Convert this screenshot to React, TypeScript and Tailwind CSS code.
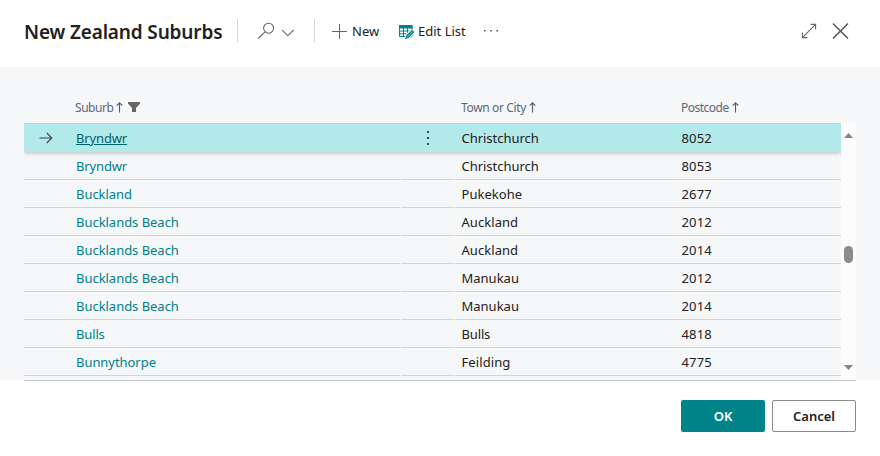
import React from "react";

type Row = { suburb: string; town: string; code: string; link: string; townCls: string };

const rows: Row[] = [
  { suburb: "Bryndwr", town: "Christchurch", code: "8052", link: "tracking-[-0.15px]", townCls: "tracking-[-0.03px]" },
  { suburb: "Bryndwr", town: "Christchurch", code: "8053", link: "tracking-[-0.15px]", townCls: "tracking-[-0.03px]" },
  { suburb: "Buckland", town: "Pukekohe", code: "2677", link: "tracking-[-0.05px]", townCls: "tracking-[0.05px]" },
  { suburb: "Bucklands Beach", town: "Auckland", code: "2012", link: "tracking-[-0.03px]", townCls: "tracking-[0.05px]" },
  { suburb: "Bucklands Beach", town: "Auckland", code: "2014", link: "tracking-[-0.03px]", townCls: "tracking-[0.05px]" },
  { suburb: "Bucklands Beach", town: "Manukau", code: "2012", link: "tracking-[-0.03px]", townCls: "tracking-normal" },
  { suburb: "Bucklands Beach", town: "Manukau", code: "2014", link: "tracking-[-0.03px]", townCls: "tracking-normal" },
  { suburb: "Bulls", town: "Bulls", code: "4818", link: "tracking-[-0.15px]", townCls: "tracking-[-0.15px]" },
  { suburb: "Bunnythorpe", town: "Feilding", code: "4775", link: "tracking-[-0.05px]", townCls: "tracking-[0.1px]" },
];

function SortArrow() {
  return (
    <svg width="7" height="11" viewBox="0 0 7 11" fill="none" stroke="#505c6d" strokeWidth="1.1">
      <path d="M3.5 10.5V1M.7 3.7 3.5.9l2.8 2.8" />
    </svg>
  );
}

function Header() {
  return (
    <header className="flex h-[67px] items-start pl-6 pt-[19px]">
      <h1 className="w-[213px] whitespace-nowrap text-[19px] font-semibold leading-[26px] tracking-[-0.15px] text-[#212121]">
        New Zealand Suburbs
      </h1>
      <div className="h-[23px] w-px bg-[#d0d3d8]" />
      <svg className="ml-[19px] mt-[3px]" width="18" height="18" viewBox="0 0 18 18" fill="none" stroke="#666" strokeWidth="1.1">
        <circle cx="11.6" cy="6.2" r="5" />
        <path d="M8 9.8 1.2 16.5" />
      </svg>
      <svg className="ml-[6px] mt-[10px]" width="14" height="8" viewBox="0 0 14 8" fill="none" stroke="#777" strokeWidth="1.1">
        <path d="m1 1 5.8 5.7L12.6 1" />
      </svg>
      <div className="ml-[19px] h-[23px] w-px bg-[#d0d3d8]" />
      <svg className="ml-[16px] mt-[4px]" width="17" height="17" viewBox="0 0 17 17" fill="none" stroke="#666" strokeWidth="1">
        <path d="M8.5 1v15M1 8.5h15" />
      </svg>
      <span className="ml-[4px] w-[47px] text-[13px] leading-6 text-[#212121]">New</span>
      <svg className="mt-[6px]" width="16" height="15" viewBox="0 0 16 15">
        <path d="M.5 1h12.5v10.5H.5z" fill="#fff" stroke="#00848a" />
        <path d="M0 0h13.5v3.5H0z" fill="#00848a" />
        <path d="M.5 6h12M.5 8.8h12M4.5 3v8.5M8.5 3v8.5" stroke="#00848a" />
        <path d="m5.2 15 1.2-5 5.6-6.3 4 3.3-5.8 7z" fill="#fff" />
        <path d="m6 14.2 1.2-3.6 5.8-5.9 2.5 2.3-5.9 6z" fill="#00848a" />
        <path d="m7.8 12.5 6.2-6.3" stroke="#9dd0d2" strokeWidth=".8" />
      </svg>
      <span className="ml-[3px] w-[65px] whitespace-nowrap text-[13px] leading-6 text-[#212121]">Edit List</span>
      <svg className="mt-[11px]" width="16" height="4" viewBox="0 0 16 4" fill="#555">
        <path d="M1 0h1.6v1.6H1zM7.2 0h1.6v1.6H7.2zM13.4 0H15v1.6h-1.6z" />
      </svg>
      <div className="ml-auto flex pr-[31px]">
        <svg className="mt-[4px]" width="16" height="16" viewBox="0 0 16 16" fill="none" stroke="#666" strokeWidth="1.1">
          <path d="M1.7 14.3 14.3 1.7M9.6 1.4h5v5M6.4 14.6h-5v-5" />
        </svg>
        <svg className="ml-[15.5px] mt-[3px]" width="17" height="18" viewBox="0 0 17 18" fill="none" stroke="#595959" strokeWidth="1.6">
          <path d="m1 1.5 15 15M16 1.5l-15 15" />
        </svg>
      </div>
    </header>
  );
}

function TableRow({ row, selected }: { row: Row; selected: boolean }) {
  return (
    <div
      className={
        selected
          ? "relative flex h-[29px] shrink-0 items-center border-t border-[#c8cfd4] bg-[#b2eaec] shadow-[0_1px_4px_rgba(0,0,0,0.25)]"
          : "flex h-7 shrink-0 items-center"
      }
    >
      <div className={`flex h-full w-[376px] items-center ${selected ? "" : "border-b border-[#d0d3d9]"}`}>
        <div className="w-[52px] pl-[15px]">
          {selected && (
            <svg width="14" height="12" viewBox="0 0 14 12" fill="none" stroke="#444" strokeWidth="1.1">
              <path d="M.5 6h12.3M7.8 1l5 5-5 5" />
            </svg>
          )}
        </div>
        <span className={`pt-[2px] ${row.link} ${selected ? "text-[#006269] underline underline-offset-1" : "text-[#008089]"}`}>
          {row.suburb}
        </span>
      </div>
      <div className={`flex h-full w-[53px] items-center pl-[26px] ${selected ? "" : "ml-px border-b border-[#d0d3d9]"}`}>
        {selected && (
          <svg width="4" height="14" viewBox="0 0 4 14" fill="#33494d">
            <path d="M1 0h2v2H1zM1 6h2v2H1zM1 12h2v2H1z" />
          </svg>
        )}
      </div>
      <div className={`flex h-full flex-1 items-center pt-[2px] text-[#212121] ${selected ? "pl-[8.5px]" : "ml-px border-b border-[#d0d3d9] pl-[6.5px]"}`}>
        <span className={`w-[220px] ${row.townCls}`}>{row.town}</span>
        <span className="tracking-[0.15px]">{row.code}</span>
      </div>
    </div>
  );
}

export default function App() {
  return (
    <div className="flex h-[456px] w-[880px] flex-col overflow-hidden rounded-[2px] bg-white font-['Noto_Sans',sans-serif]">
      <Header />
      <main className="h-[314px] bg-[linear-gradient(to_bottom,#f5f7f9_313px,white_313px)] px-6">
        <div className="flex h-14 items-center pl-[51px] pt-[24px] text-[12px] text-[#5c6778]">
          <div className="flex w-[386px] items-center">
            <span className="mr-[3px] pt-[2px] tracking-[-0.45px]">Suburb</span>
            <SortArrow />
            <svg className="ml-[5px]" width="12" height="10" viewBox="0 0 12 10" fill="#666">
              <path d="M0 0h12v1.5L8 6v4H4V6L0 1.5z" />
            </svg>
          </div>
          <div className="flex w-[220px] items-center">
            <span className="mr-[3px] pt-[2px] tracking-[-0.35px]">Town or City</span>
            <SortArrow />
          </div>
          <div className="flex items-center">
            <span className="mr-[3px] pt-[2px] tracking-[-0.5px]">Postcode</span>
            <SortArrow />
          </div>
        </div>
        <div className="flex h-[258px] border-b border-[#c4c6ca] text-[13px]">
          <div className="flex w-[817px] flex-col overflow-hidden">
            {rows.map((row, i) => (
              <TableRow key={i} row={row} selected={i === 0} />
            ))}
          </div>
          <div className="flex w-[15px] flex-col items-center bg-[#fcfcfc] pt-[10px]">
            <svg width="9" height="5" viewBox="0 0 9 5" fill="#858585">
              <path d="M4.5 0 9 5H0z" />
            </svg>
            <div className="mt-[108px] h-[17px] w-[9px] rounded-full bg-[#8b8b8b]" />
            <svg className="mt-[102px]" width="9" height="5" viewBox="0 0 9 5" fill="#858585">
              <path d="M0 0h9L4.5 5z" />
            </svg>
          </div>
        </div>
      </main>
      <footer className="flex justify-end gap-[7px] px-6 pt-[19px] text-[13px] font-semibold">
        <button className="h-8 w-[84px] rounded-[2px] bg-[#008489] pt-px text-white">OK</button>
        <button className="h-8 w-[84px] rounded-[2px] border border-[#8a8a8a] bg-white pt-px text-[#212121]">Cancel</button>
      </footer>
    </div>
  );
}
